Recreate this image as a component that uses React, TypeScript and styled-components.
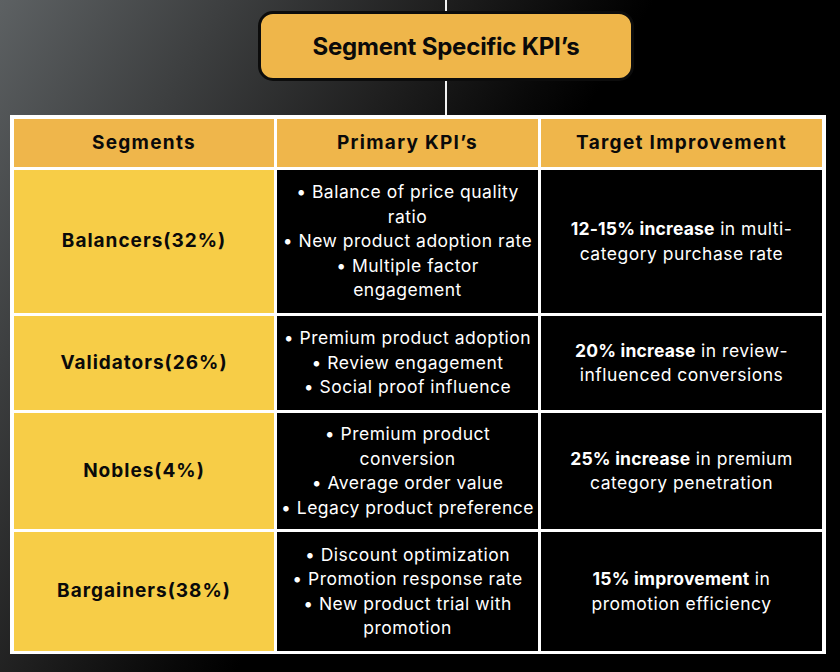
import React from "react";
import styled, { createGlobalStyle } from "styled-components";

const Global = createGlobalStyle`
  html, body { margin: 0; padding: 0; background: #000; }
  body { font-family: Inter, "Open Sans", sans-serif; }
`;

const Page = styled.div`
  width: 840px;
  height: 672px;
  box-sizing: border-box;
  padding: 0 0 0 10px;
  background: linear-gradient(122deg, #5d6163 0%, #3d3f40 18%, #1f1f1f 35%, #080808 47%, #000 52%, #000 100%);
  display: flex;
  flex-direction: column;
  overflow: hidden;
`;

const Header = styled.div`
  display: flex;
  flex-direction: column;
  align-items: center;
  padding-left: 42px;
`;

const Connector = styled.div<{ $h: number }>`
  width: 2px;
  height: ${(p) => p.$h}px;
  background: #f2f2f2;
`;

const TitleBox = styled.div`
  width: 370px;
  height: 64px;
  box-sizing: content-box;
  border: 3px solid #0c0c0c;
  border-radius: 15px;
  background: #efb64a;
  display: flex;
  align-items: center;
  justify-content: center;
  font-weight: 700;
  font-size: 24px;
  letter-spacing: -0.2px;
  color: #0a0a0a;
`;

const Table = styled.div`
  width: 808px;
  padding: 4px 4px 3px 4px;
  background: #fff;
  display: grid;
  grid-template-columns: 260px 261px 281px;
  grid-template-rows: 48px 143px 94px 116px 119px;
  gap: 3px;
`;

const Cell = styled.div<{ $kind: "head" | "seg" | "dark" }>`
  display: flex;
  flex-direction: column;
  align-items: center;
  justify-content: center;
  text-align: center;
  background: ${(p) =>
    p.$kind === "head" ? "#efb64b" : p.$kind === "seg" ? "#f7cd47" : "#000"};
  color: ${(p) => (p.$kind === "dark" ? "#fff" : "#0a0a0a")};
  font-weight: ${(p) => (p.$kind === "dark" ? 400 : 700)};
  font-size: ${(p) => (p.$kind === "dark" ? "17.5px" : "19px")};
  letter-spacing: ${(p) => (p.$kind === "dark" ? "0.5px" : p.$kind === "head" ? "1.3px" : "1px")};
  line-height: 24.5px;
`;

const Line = styled.span`
  display: block;
  white-space: nowrap;
`;

const Strong = styled.b`
  font-weight: 700;
  letter-spacing: 0.2px;
`;

type Row = {
  seg: string;
  kpis: string[];
  bold: string;
  rest: string;
  tail: string;
};

const rows: Row[] = [
  {
    seg: "Balancers(32%)",
    kpis: ["• Balance of price quality", "ratio", "• New product adoption rate", "• Multiple factor", "engagement"],
    bold: "12-15% increase",
    rest: " in multi-",
    tail: "category purchase rate",
  },
  {
    seg: "Validators(26%)",
    kpis: ["• Premium product adoption", "• Review engagement", "• Social proof influence"],
    bold: "20% increase",
    rest: " in review-",
    tail: "influenced conversions",
  },
  {
    seg: "Nobles(4%)",
    kpis: ["• Premium product", "conversion", "• Average order value", "• Legacy product preference"],
    bold: "25% increase",
    rest: " in premium",
    tail: "category penetration",
  },
  {
    seg: "Bargainers(38%)",
    kpis: ["• Discount optimization", "• Promotion response rate", "• New product trial with", "promotion"],
    bold: "15% improvement",
    rest: " in",
    tail: "promotion efficiency",
  },
];

export default function App() {
  return (
    <>
      <Global />
      <Page>
        <Header>
          <Connector $h={11} />
          <TitleBox>Segment Specific KPI’s</TitleBox>
          <Connector $h={34} />
        </Header>
        <Table>
          <Cell $kind="head">Segments</Cell>
          <Cell $kind="head">Primary KPI’s</Cell>
          <Cell $kind="head">Target Improvement</Cell>
          {rows.map((r) => (
            <React.Fragment key={r.seg}>
              <Cell $kind="seg">{r.seg}</Cell>
              <Cell $kind="dark">
                {r.kpis.map((k) => (
                  <Line key={k}>{k}</Line>
                ))}
              </Cell>
              <Cell $kind="dark">
                <Line>
                  <Strong>{r.bold}</Strong>
                  {r.rest}
                </Line>
                <Line>{r.tail}</Line>
              </Cell>
            </React.Fragment>
          ))}
        </Table>
      </Page>
    </>
  );
}
